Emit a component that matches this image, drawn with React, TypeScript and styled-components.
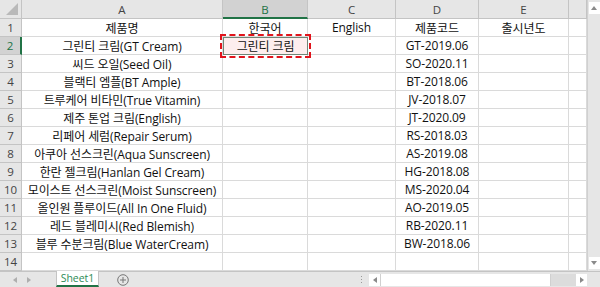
import React from "react";
import styled, { createGlobalStyle } from "styled-components";

const Global = createGlobalStyle`
  html, body { margin: 0; padding: 0; background: #ffffff; overflow: hidden; }
  body { font-family: "Noto Sans CJK KR", "Noto Sans", sans-serif; }
`;

const COLS = [22, 201, 85, 88, 83, 90, 18];
const ROW_H = 18;
const HEAD_H = 19;

const Window = styled.div`
  width: 600px;
  height: 287px;
  display: flex;
  flex-direction: column;
  background: #fff;
  overflow: hidden;
`;

const SheetArea = styled.div`
  display: flex;
  height: 271px;
`;

const Grid = styled.div`
  flex: 1;
  display: grid;
  grid-template-columns: ${COLS.map((c) => c + "px").join(" ")};
  grid-template-rows: ${HEAD_H}px repeat(14, ${ROW_H}px);
  overflow: hidden;
`;

const Corner = styled.div`
  background: #e6e6e6;
  border-right: 1px solid #c4c4c4;
  border-bottom: 1px solid #c4c4c4;
  box-sizing: border-box;
  position: relative;
  &::after {
    content: "";
    position: absolute;
    right: 3px;
    bottom: 3px;
    width: 0;
    height: 0;
    border-left: 12px solid transparent;
    border-bottom: 12px solid #b9b9b9;
  }
`;

const ColHead = styled.div<{ $sel?: boolean }>`
  background: ${(p) => (p.$sel ? "#d2d2d2" : "#e6e6e6")};
  color: ${(p) => (p.$sel ? "#217346" : "#444")};
  border-right: 1px solid #c4c4c4;
  border-bottom: ${(p) => (p.$sel ? "2px solid #217346" : "1px solid #c4c4c4")};
  box-sizing: border-box;
  display: flex;
  align-items: center;
  justify-content: center;
  font-family: "Open Sans", "Noto Sans", sans-serif;
  font-size: 11.5px;
  padding-top: ${(p) => (p.$sel ? "1px" : "0")};
`;

const RowHead = styled.div<{ $sel?: boolean }>`
  background: ${(p) => (p.$sel ? "#d2d2d2" : "#e6e6e6")};
  color: ${(p) => (p.$sel ? "#217346" : "#444")};
  border-right: ${(p) => (p.$sel ? "2px solid #217346" : "1px solid #c4c4c4")};
  border-bottom: 1px solid #c4c4c4;
  box-sizing: border-box;
  display: flex;
  align-items: center;
  justify-content: center;
  font-family: "Open Sans", "Noto Sans", sans-serif;
  font-size: 11.5px;
`;

const Cell = styled.div`
  border-right: 1px solid #dadada;
  border-bottom: 1px solid #dadada;
  box-sizing: border-box;
  display: flex;
  align-items: center;
  justify-content: center;
  white-space: nowrap;
  overflow: visible;
  font-family: "Open Sans", "Noto Sans CJK KR", sans-serif;
  font-size: 12px;
  color: #111;
  letter-spacing: -0.1px;
`;

const SelCell = styled(Cell)`
  position: relative;
  background: #fdeeee;
  border: 1px solid #6f8676;
  z-index: 2;
`;

const Marquee = styled.div`
  position: absolute;
  left: -4px;
  top: -4px;
  right: -4px;
  bottom: -4px;
  border: 2px dashed #e0141c;
  pointer-events: none;
`;

const VScroll = styled.div`
  width: 13px;
  background: #e6e6e6;
  border-left: 1px solid #d0d0d0;
  box-sizing: border-box;
  display: flex;
  flex-direction: column;
  justify-content: space-between;
  align-items: center;
  padding: 2px 0;
`;

const ArrowBox = styled.div`
  width: 11px;
  height: 12px;
  background: #fff;
  display: flex;
  align-items: center;
  justify-content: center;
`;

const TabBar = styled.div`
  height: 16px;
  background: #e6e6e6;
  border-top: 1px solid #c4c4c4;
  box-sizing: border-box;
  display: flex;
  align-items: stretch;
  font-family: "Open Sans", "Noto Sans", sans-serif;
`;

const Nav = styled.div`
  width: 56px;
  display: flex;
  align-items: center;
  gap: 10px;
  padding-left: 13px;
  box-sizing: border-box;
  opacity: 0.6;
`;

const Tab = styled.div`
  width: 43px;
  background: #fff;
  color: #2e8b57;
  font-size: 10.5px;
  display: flex;
  align-items: center;
  justify-content: center;
  border-bottom: 2px solid #217346;
  border-left: 1px solid #c4c4c4;
  border-right: 1px solid #c4c4c4;
  box-sizing: border-box;
  margin-top: -1px;
`;

const AddSheet = styled.div`
  width: 48px;
  display: flex;
  align-items: center;
  justify-content: center;
`;

const Spacer = styled.div`
  flex: 1;
  display: flex;
  align-items: center;
  justify-content: flex-end;
  padding-right: 7px;
`;

const Dots = styled.div`
  display: flex;
  flex-direction: column;
  gap: 2px;
  & > span {
    width: 1px;
    height: 1px;
    background: #999;
  }
`;

const HScroll = styled.div`
  width: 218px;
  height: 12px;
  align-self: center;
  display: flex;
  background: #dcdcdc;
`;

const HArrow = styled.div`
  width: 11px;
  background: #fff;
  display: flex;
  align-items: center;
  justify-content: center;
`;

const Thumb = styled.div`
  width: 171px;
  background: #fff;
  border-left: 1px solid #d0d0d0;
  border-right: 1px solid #d0d0d0;
  box-sizing: border-box;
`;

const Track = styled.div`
  flex: 1;
`;

const EndPad = styled.div`
  width: 13px;
`;

const Tri = ({ dir }: { dir: "up" | "down" | "left" | "right" }) => {
  const pts = {
    up: "0,4 3,0 6,4",
    down: "0,0 6,0 3,4",
    left: "4,0 4,6 0,3",
    right: "0,0 0,6 4,3",
  }[dir];
  const w = dir === "up" || dir === "down" ? 6 : 4;
  const h = dir === "up" || dir === "down" ? 4 : 6;
  return (
    <svg width={w} height={h} viewBox={`0 0 ${w} ${h}`}>
      <polygon points={pts} fill="#8a8a8a" />
    </svg>
  );
};

const rows: [string, string, string, string, string][] = [
  ["제품명", "한국어", "English", "제품코드", "출시년도"],
  ["그린티 크림(GT Cream)", "그린티 크림", "", "GT-2019.06", ""],
  ["씨드 오일(Seed Oil)", "", "", "SO-2020.11", ""],
  ["블랙티 엠플(BT Ample)", "", "", "BT-2018.06", ""],
  ["트루케어 비타민(True Vitamin)", "", "", "JV-2018.07", ""],
  ["제주 톤업 크림(English)", "", "", "JT-2020.09", ""],
  ["리페어 세럼(Repair Serum)", "", "", "RS-2018.03", ""],
  ["아쿠아 선스크린(Aqua Sunscreen)", "", "", "AS-2019.08", ""],
  ["한란 젤크림(Hanlan Gel Cream)", "", "", "HG-2018.08", ""],
  ["모이스트 선스크린(Moist Sunscreen)", "", "", "MS-2020.04", ""],
  ["올인원 플루이드(All In One Fluid)", "", "", "AO-2019.05", ""],
  ["레드 블레미시(Red Blemish)", "", "", "RB-2020.11", ""],
  ["블루 수분크림(Blue WaterCream)", "", "", "BW-2018.06", ""],
  ["", "", "", "", ""],
];

const letters = ["A", "B", "C", "D", "E", ""];

export default function App() {
  return (
    <>
      <Global />
      <Window>
        <SheetArea>
          <Grid>
            <Corner />
            {letters.map((l, i) => (
              <ColHead key={i} $sel={l === "B"}>
                {l}
              </ColHead>
            ))}
            {rows.map((r, ri) => (
              <React.Fragment key={ri}>
                <RowHead $sel={ri === 1}>{ri + 1}</RowHead>
                {r.map((v, ci) =>
                  ri === 1 && ci === 1 ? (
                    <SelCell key={ci}>
                      {v}
                      <Marquee />
                    </SelCell>
                  ) : (
                    <Cell key={ci}>{v}</Cell>
                  )
                )}
                <Cell />
              </React.Fragment>
            ))}
          </Grid>
          <VScroll>
            <ArrowBox>
              <Tri dir="up" />
            </ArrowBox>
            <ArrowBox>
              <Tri dir="down" />
            </ArrowBox>
          </VScroll>
        </SheetArea>
        <TabBar>
          <Nav>
            <Tri dir="left" />
            <Tri dir="right" />
          </Nav>
          <Tab>Sheet1</Tab>
          <AddSheet>
            <svg width="12" height="12" viewBox="0 0 12 12">
              <circle cx="6" cy="6" r="5.3" fill="none" stroke="#777" strokeWidth="1" />
              <path d="M6 3v6M3 6h6" stroke="#777" strokeWidth="1" />
            </svg>
          </AddSheet>
          <Spacer>
            <Dots>
              <span />
              <span />
              <span />
            </Dots>
          </Spacer>
          <HScroll>
            <HArrow>
              <Tri dir="left" />
            </HArrow>
            <Thumb />
            <Track />
            <HArrow>
              <Tri dir="right" />
            </HArrow>
          </HScroll>
          <EndPad />
        </TabBar>
      </Window>
    </>
  );
}
